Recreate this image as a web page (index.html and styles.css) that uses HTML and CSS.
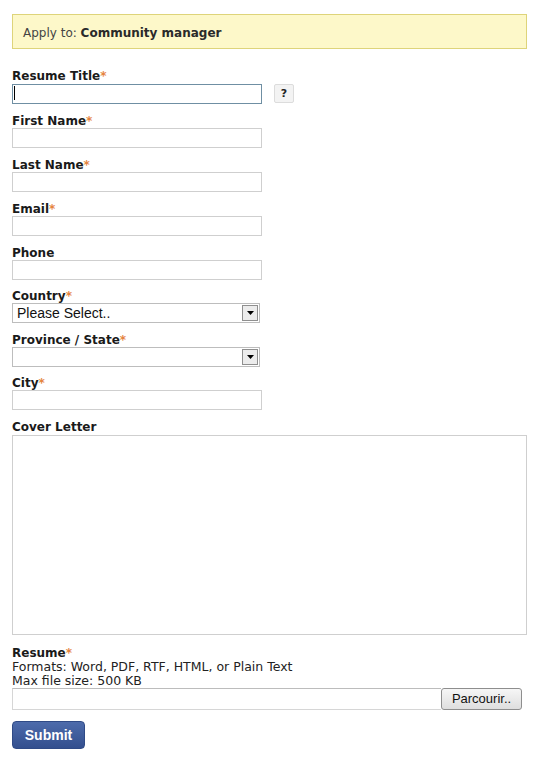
FILE: index.html
```html
<!DOCTYPE html>
<html>
<head>
<meta charset="utf-8">
<link rel="stylesheet" href="styles.css">
</head>
<body>
<div class="page">
  <div class="banner">Apply to: <b>Community manager</b></div>
  <form class="form">
    <div class="field">
      <label class="lbl">Resume Title<span class="req">*</span></label>
      <div class="row">
        <span class="focus-wrap"><input class="txt focused" type="text"><span class="caret"></span></span>
        <button type="button" class="help">?</button>
      </div>
    </div>
    <div class="field">
      <label class="lbl">First Name<span class="req">*</span></label>
      <input class="txt" type="text">
    </div>
    <div class="field">
      <label class="lbl">Last Name<span class="req">*</span></label>
      <input class="txt" type="text">
    </div>
    <div class="field">
      <label class="lbl">Email<span class="req">*</span></label>
      <input class="txt" type="text">
    </div>
    <div class="field tight">
      <label class="lbl">Phone</label>
      <input class="txt" type="text">
    </div>
    <div class="field">
      <label class="lbl">Country<span class="req">*</span></label>
      <span class="sel-wrap"><select class="sel"><option>Please Select..</option></select><span class="arrow"><svg width="7" height="4" viewBox="0 0 7 4"><path d="M0 0H7L3.5 4Z" fill="#000"/></svg></span></span>
    </div>
    <div class="field tight">
      <label class="lbl">Province / State<span class="req">*</span></label>
      <span class="sel-wrap"><select class="sel"><option></option></select><span class="arrow"><svg width="7" height="4" viewBox="0 0 7 4"><path d="M0 0H7L3.5 4Z" fill="#000"/></svg></span></span>
    </div>
    <div class="field">
      <label class="lbl">City<span class="req">*</span></label>
      <input class="txt" type="text">
    </div>
    <div class="field">
      <label class="lbl">Cover Letter</label>
      <textarea class="area"></textarea>
    </div>
    <div class="field resume">
      <label class="lbl">Resume<span class="req">*</span></label>
      <div class="note">Formats: Word, PDF, RTF, HTML, or Plain Text</div>
      <div class="note">Max file size: 500 KB</div>
      <div class="file">
        <input class="file-txt" type="text">
        <button type="button" class="browse">Parcourir..</button>
      </div>
    </div>
    <button type="button" class="submit">Submit</button>
  </form>
</div>
</body>
</html>
```
FILE: styles.css
```css
html, body {
  margin: 0;
  padding: 0;
  background: #fff;
}
.page {
  padding: 14px 23px 0 12px;
  font-family: "DejaVu Sans", Verdana, sans-serif;
  color: #222;
}
.banner {
  height: 30px;
  line-height: 30px;
  padding-top: 3px;
  background: #fdf8c9;
  border: 1px solid #ded47a;
  padding-left: 10px;
  font-size: 12px;
  color: #444;
}
.banner b {
  color: #2a2a2a;
}
.form {
  margin-top: 19px;
}
.field {
  display: flex;
  flex-direction: column;
  align-items: flex-start;
  margin-bottom: 9px;
}
.field.tight {
  margin-bottom: 8px;
}
.lbl {
  font-size: 12px;
  font-weight: bold;
  line-height: 15px;
  height: 14px;
  padding-top: 1px;
  color: #1a1a1a;
}
.req {
  color: #e5843e;
}
.row {
  display: flex;
  align-items: center;
  gap: 12px;
}
.txt {
  box-sizing: border-box;
  width: 250px;
  height: 20px;
  border: 1px solid #cfcfcf;
  margin: 0;
  padding: 0 3px;
  outline: none;
  background: #fff;
}
.focus-wrap {
  position: relative;
  display: block;
}
.txt.focused {
  border: 1px solid #6f8fa3;
}
.caret {
  position: absolute;
  left: 2px;
  top: 3px;
  width: 1px;
  height: 14px;
  background: #000;
}
.help {
  box-sizing: border-box;
  width: 20px;
  height: 19px;
  margin: 0;
  padding: 0;
  border: 1px solid #dcdcdc;
  background: #f3f3f3;
  border-radius: 2px;
  font-family: "DejaVu Sans", Verdana, sans-serif;
  font-weight: bold;
  font-size: 11px;
  color: #222;
}
.sel-wrap {
  position: relative;
  display: block;
  width: 248px;
  height: 20px;
}
.sel {
  box-sizing: border-box;
  width: 248px;
  height: 20px;
  margin: 0;
  border: 1px solid #bdbdbd;
  appearance: none;
  -webkit-appearance: none;
  background: #fff;
  border-radius: 0;
  padding: 0 0 0 4px;
  font-family: "Liberation Sans", Arial, sans-serif;
  font-size: 14px;
  color: #111;
  outline: none;
}
.arrow {
  position: absolute;
  right: 2px;
  top: 2px;
  box-sizing: border-box;
  width: 16px;
  height: 16px;
  background: #ececec;
  border: 1px solid #8f8f8f;
  display: flex;
  align-items: center;
  justify-content: center;
}
.area {
  box-sizing: border-box;
  width: 515px;
  height: 200px;
  margin: 1px 0 0 0;
  border: 1px solid #cfcfcf;
  resize: none;
  outline: none;
}
.resume {
  margin-top: 10px;
  margin-bottom: 11px;
}
.note {
  font-size: 12.5px;
  line-height: 14px;
  color: #222;
}
.file {
  display: flex;
  align-items: center;
  width: 510px;
  height: 22px;
}
.file-txt {
  box-sizing: border-box;
  flex: 1;
  height: 22px;
  margin: 0;
  border: 1px solid #d6d6d6;
  border-top-color: #bcbcbc;
  border-right: none;
  outline: none;
}
.browse {
  box-sizing: border-box;
  width: 81px;
  height: 22px;
  margin: 0;
  padding: 0;
  border: 1px solid #8e8e8e;
  border-radius: 3px;
  background: linear-gradient(#f6f6f6, #dedede);
  font-family: "Liberation Sans", Arial, sans-serif;
  font-size: 13px;
  color: #111;
}
.submit {
  box-sizing: border-box;
  width: 73px;
  height: 28px;
  margin: 0;
  padding: 0;
  border: 1px solid #2f4a86;
  border-radius: 4px;
  background: linear-gradient(#4d6bab, #334f8e);
  color: #fff;
  font-family: "Liberation Sans", Arial, sans-serif;
  font-weight: bold;
  font-size: 14px;
}
```
